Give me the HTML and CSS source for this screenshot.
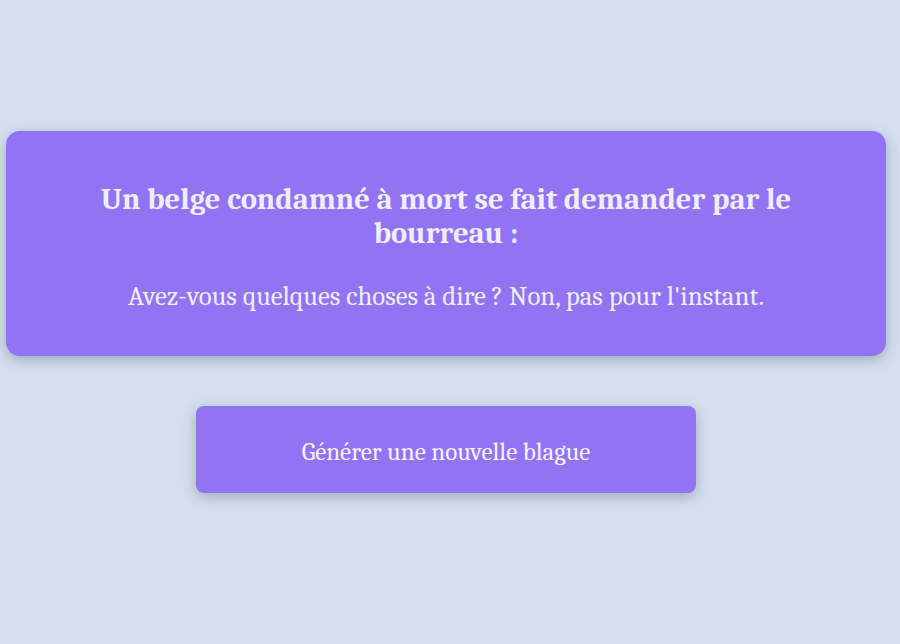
FILE: index.html
```html
<!DOCTYPE html>
<html lang="fr">
<head>
<meta charset="utf-8">
<title>Blague</title>
<link rel="stylesheet" href="styles.css">
</head>
<body>
<main class="page">
  <section class="card">
    <h1 class="setup">Un belge condamné à mort se fait demander par le bourreau :</h1>
    <p class="punchline">Avez-vous quelques choses à dire ? Non, pas pour l'instant.</p>
  </section>
  <button class="btn" type="button">Générer une nouvelle blague</button>
</main>
</body>
</html>
```
FILE: styles.css
```css
html, body {
  margin: 0;
  padding: 0;
}
body {
  background: #d4e0ee;
  font-family: Cambria, Caladea, "Liberation Serif", serif;
  color: #eeeef5;
}
.page {
  min-height: 644px;
  box-sizing: border-box;
  padding: 131px 14px 0 6px;
  display: flex;
  flex-direction: column;
  align-items: center;
  gap: 50px;
}
.card {
  align-self: stretch;
  background: #9173f4;
  border-radius: 14px;
  box-shadow: 0 4px 14px rgba(40, 50, 80, 0.3);
  padding: 52px 60px 40px;
  text-align: center;
  height: 225px;
  box-sizing: border-box;
}
.setup {
  margin: 0;
  font-size: 30.5px;
  line-height: 34px;
  font-weight: bold;
}
.punchline {
  margin: 30px 0 0;
  font-size: 26.8px;
  line-height: 32px;
}
.btn {
  width: 500px;
  height: 87px;
  border: none;
  border-radius: 8px;
  background: #9173f4;
  color: #f4f2fb;
  font-family: inherit;
  font-size: 25px;
  padding: 3px 0 0;
  box-shadow: 0 4px 14px rgba(40, 50, 80, 0.3);
  cursor: pointer;
}
```
